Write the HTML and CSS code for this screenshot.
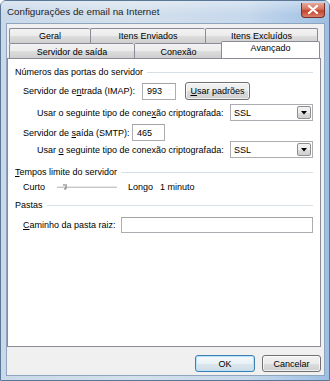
FILE: index.html
```html
<!DOCTYPE html>
<html lang="pt">
<head>
<meta charset="utf-8">
<title>Configurações de email na Internet</title>
<link rel="stylesheet" href="styles.css">
</head>
<body>
<div class="window">
  <div class="titlebar">
    <span class="title">Configurações de email na Internet</span>
    <div class="close">
      <svg width="12" height="9" viewBox="0 0 12 9"><path d="M2 1 L10 8 M10 1 L2 8" stroke="#fff" stroke-width="2.2" stroke-linecap="round"/></svg>
    </div>
  </div>
  <div class="client">
    <div class="tabs">
      <div class="tabrow row1">
        <div class="tab t-geral">Geral</div>
        <div class="tab t-env">Itens Enviados</div>
        <div class="tab t-exc">Itens Excluídos</div>
      </div>
      <div class="tabrow row2">
        <div class="tab t-serv">Servidor de saída</div>
        <div class="tab t-con">Conexão</div>
        <div class="tab t-av sel">Avançado</div>
      </div>
    </div>
    <div class="panel">
      <div class="group g1"><span>Números das portas do servidor</span><i class="rule"></i></div>
      <div class="row r-imap">
        <span class="lbl w-imap">Servidor de e<u>n</u>trada (IMAP):</span>
        <div class="field w-port">993</div>
        <div class="btn b-usar"><u>U</u>sar padrões</div>
      </div>
      <div class="row r-ssl1 sub">
        <span class="lbl w-ssl">Usar o seguinte tipo de cone<u>x</u>ão criptografada:</span>
        <div class="combo"><span>SSL</span><div class="drop"><svg width="6" height="4" viewBox="0 0 6 4"><path d="M0 0 H6 L3 3.5 Z" fill="#000"/></svg></div></div>
      </div>
      <div class="row r-smtp">
        <span class="lbl w-smtp">Servidor de <u>s</u>aída (SMTP):</span>
        <div class="field w-port2">465</div>
      </div>
      <div class="row r-ssl2 sub">
        <span class="lbl w-ssl">Usar <u>o</u> seguinte tipo de conexão criptografada:</span>
        <div class="combo"><span>SSL</span><div class="drop"><svg width="6" height="4" viewBox="0 0 6 4"><path d="M0 0 H6 L3 3.5 Z" fill="#000"/></svg></div></div>
      </div>
      <div class="group g2"><span><u>T</u>empos limite do servidor</span><i class="rule"></i></div>
      <div class="row r-slider">
        <span class="lbl w-curto">Curto</span>
        <div class="slider">
          <svg width="60" height="8" viewBox="0 0 60 8"><path d="M0 4.5 H60" stroke="#c8c8c8" stroke-width="1"/><path d="M0 3.5 H60" stroke="#e8e8e8" stroke-width="1"/><path d="M6 2 H8 M9 1 V6 H7" stroke="#707070" stroke-width="1" fill="none"/></svg>
        </div>
        <span class="lbl w-longo">Longo</span>
        <span class="lbl">1 minuto</span>
      </div>
      <div class="group g3"><span>Pastas</span><i class="rule"></i></div>
      <div class="row r-path">
        <span class="lbl w-path"><u>C</u>aminho da pasta raiz:</span>
        <div class="field w-long"></div>
      </div>
    </div>
    <div class="buttons">
      <div class="btn b-ok">OK</div>
      <div class="btn b-cancel">Cancelar</div>
    </div>
  </div>
</div>
</body>
</html>
```
FILE: styles.css
```css
* { box-sizing: border-box; }
html, body { margin: 0; padding: 0; }
body {
  width: 330px;
  height: 381px;
  overflow: hidden;
  font-family: "Liberation Sans", Arial, sans-serif;
  font-size: 9px;
  color: #000;
  background: #ffffff;
}
.window {
  width: 330px;
  height: 381px;
  display: flex;
  flex-direction: column;
  border: 1px solid #5a7796;
  border-radius: 6px 6px 0 0;
  background: linear-gradient(to right, #c9d9ea 0%, #d4e0ec 40%, #c6d8ec 75%, #9dbfe3 100%);
}
.titlebar {
  height: 23px;
  display: flex;
  align-items: center;
  justify-content: space-between;
  padding: 0 4px 0 6px;
  background: linear-gradient(to bottom, rgba(255,255,255,0.35), rgba(255,255,255,0) 60%);
}
.title {
  font-size: 9.8px;
  color: #1e1e1e;
  margin-top: -1px;
}
.close {
  width: 24px;
  height: 15px;
  margin-top: -4px;
  border: 1px solid #7a2f2a;
  border-top: none;
  border-radius: 0 0 4px 4px;
  background: linear-gradient(to bottom, #e9a99b 0%, #d4705c 45%, #c4432a 55%, #d9806a 100%);
  display: flex;
  align-items: center;
  justify-content: center;
}
.client {
  flex: 1;
  margin: 0 4px 4px 5px;
  background: #f0f0f0;
  border: 1px solid #8ea4bf;
  display: flex;
  flex-direction: column;
  padding: 3px 3px 3px 0;
}
.tabs {
  display: flex;
  flex-direction: column;
  padding-left: 2px;
  padding-top: 1px;
}
.tabrow {
  display: flex;
  height: 15px;
}
.tab {
  height: 15px;
  border: 1px solid #898c95;
  border-bottom: none;
  border-right: none;
  background: linear-gradient(to bottom, #f3f3f3 0%, #ebebeb 50%, #dddddd 51%, #cfcfcf 100%);
  display: flex;
  align-items: center;
  justify-content: center;
  border-radius: 2px 2px 0 0;
}
.row2 .tab { padding-top: 1px; }
.tab:last-child { border-right: 1px solid #898c95; }
.t-geral { width: 81px; }
.t-env { width: 115px; }
.t-exc { width: 113px; }
.t-serv { width: 125px; }
.t-con { width: 89px; border-right: 1px solid #898c95; }
.row2 .tab.sel {
  width: 99px;
  height: 17px;
  margin-top: -2px;
  margin-left: -2px;
  background: #ffffff;
  position: relative;
  z-index: 2;
  align-items: flex-start;
  padding-top: 1px;
}
.panel {
  height: 289px;
  background: #ffffff;
  border: 1px solid #898c95;
  display: flex;
  flex-direction: column;
  padding: 0 7px 0 7px;
}
.group {
  display: flex;
  align-items: center;
  height: 12px;
}
.group .rule {
  flex: 1;
  height: 1px;
  background: #d5dfe5;
  margin-left: 4px;
}
.g1 { margin-top: 7px; }
.g2 { margin-top: 8px; }
.g3 { margin-top: 6px; }
.row {
  display: flex;
  align-items: center;
  padding-left: 8px;
}
.row.sub { padding-left: 22px; }
.r-imap { margin-top: 4px; height: 18px; }
.r-ssl1 { margin-top: 4px; height: 17px; }
.r-smtp { margin-top: 3px; height: 17px; }
.r-ssl2 { margin-top: 0; height: 17px; }
.r-slider { margin-top: 3px; height: 12px; }
.r-path { margin-top: 6px; height: 16px; }
.lbl { white-space: nowrap; }
.w-imap { width: 119px; }
.w-smtp { width: 109px; }
.w-ssl { width: 193px; }
.w-curto { width: 34px; }
.w-longo { width: 32px; }
.w-path { width: 98px; }
.field {
  height: 17px;
  border: 1px solid #abadb3;
  border-top-color: #a3a3a3;
  background: #fff;
  display: flex;
  align-items: center;
  padding-left: 4px;
}
.w-port { width: 34px; }
.w-port2 { width: 33px; }
.w-long { width: 193px; height: 16px; }
.btn {
  display: flex;
  align-items: center;
  justify-content: center;
  border: 1px solid #707070;
  border-radius: 3px;
  background: linear-gradient(to bottom, #f2f2f2 0%, #ebebeb 50%, #dddddd 51%, #cfcfcf 100%);
  box-shadow: inset 0 0 0 1px rgba(255,255,255,0.7);
}
.b-usar {
  width: 65px;
  height: 18px;
  margin-left: 9px;
}
.combo {
  width: 83px;
  height: 17px;
  border: 1px solid #abadb3;
  background: #fff;
  display: flex;
  align-items: center;
  justify-content: space-between;
  padding-left: 3px;
  padding-right: 1px;
}
.drop {
  width: 14px;
  height: 13px;
  border: 1px solid #8e8f8f;
  border-radius: 2px;
  background: linear-gradient(to bottom, #f2f2f2 0%, #ebebeb 50%, #dddddd 51%, #cfcfcf 100%);
  display: flex;
  align-items: center;
  justify-content: center;
}
.slider {
  width: 71px;
  display: flex;
  align-items: center;
}
.buttons {
  display: flex;
  justify-content: flex-end;
  gap: 7px;
  margin-top: 8px;
}
.b-ok, .b-cancel {
  width: 60px;
  height: 17px;
}
.b-ok {
  border-color: #3c7fb1;
  box-shadow: inset 0 0 0 1px #b6e3fa;
  background: linear-gradient(to bottom, #f4f9fc 0%, #e9f1f6 50%, #dce6ee 51%, #cfdce6 100%);
}
.b-cancel { width: 59px; }
```
